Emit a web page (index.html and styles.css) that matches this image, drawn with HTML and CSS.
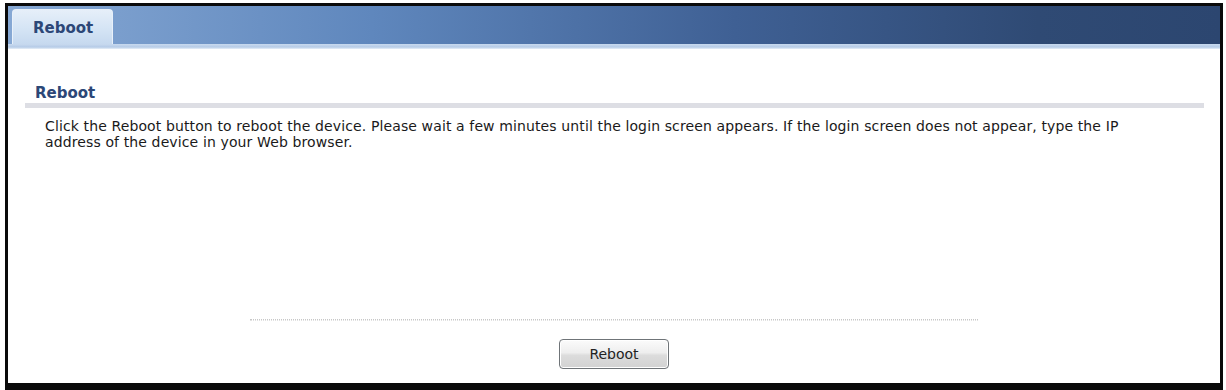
FILE: index.html
```html
<!DOCTYPE html>
<html>
<head>
<meta charset="utf-8">
<link rel="stylesheet" href="styles.css">
</head>
<body>
<div class="frame">
  <div class="header">
    <div class="tab">Reboot</div>
  </div>
  <div class="header-line"></div>
  <div class="content">
    <div class="section-title">Reboot</div>
    <div class="section-bar"></div>
    <p class="desc">Click the Reboot button to reboot the device. Please wait a few minutes until the login screen appears. If the login screen does not appear, type the IP address of the device in your Web browser.</p>
  </div>
  <div class="footer">
    <div class="dots"></div>
    <button class="btn">Reboot</button>
  </div>
</div>
</body>
</html>
```
FILE: styles.css
```css
html, body {
  margin: 0;
  padding: 0;
  background: #ffffff;
}
body {
  padding: 3px 0 0 5px;
  font-family: "DejaVu Sans", Tahoma, sans-serif;
}
.frame {
  width: 1212px;
  height: 377px;
  border: 3px solid #0a0a0a;
  border-bottom-width: 7px;
  display: flex;
  flex-direction: column;
  background: #ffffff;
}
.header {
  height: 38px;
  background: linear-gradient(to right, #86a8d4 0%, #5f87bd 30%, #3f6094 60%, #2f4a74 85%, #2c4670 100%);
  display: flex;
  align-items: flex-end;
  padding-left: 4px;
}
.tab {
  width: 101px;
  height: 35px;
  box-sizing: border-box;
  border: 1px solid #e8f0f9;
  border-bottom: none;
  border-radius: 4px 4px 0 0;
  background: linear-gradient(to bottom, #e6eff9 0%, #d3e3f4 60%, #c6d9ef 100%);
  color: #2c4777;
  font-weight: bold;
  font-size: 15px;
  padding: 9px 0 0 20px;
}
.header-line {
  height: 5px;
  background: linear-gradient(to bottom, #c9daef 0%, #b5cbe7 60%, #e7eff8 100%);
}
.content {
  flex: 1;
  padding: 35px 16px 0 17px;
}
.section-title {
  color: #2c4777;
  font-weight: bold;
  font-size: 15px;
  padding-left: 10px;
  line-height: 18px;
}
.section-bar {
  height: 5px;
  margin-top: 1px;
  background: #dddee4;
}
.desc {
  margin: 10px 0 0 20px;
  padding-right: 60px;
  font-size: 14px;
  line-height: 16px;
  color: #1a1a1a;
  letter-spacing: 0.12px;
}
.footer {
  display: flex;
  flex-direction: column;
  align-items: center;
  padding-bottom: 14px;
}
.dots {
  width: 728px;
  height: 0;
  border-top: 1px dotted #c8c8c8;
  border-bottom: 1px dotted #e2e2e2;
  margin-bottom: 18px;
}
.btn {
  width: 110px;
  height: 30px;
  border: 1px solid #6f7478;
  border-radius: 4px;
  background: linear-gradient(to bottom, #fbfbfb 0%, #eeeeee 45%, #dcdcdc 55%, #d2d2d2 100%);
  box-shadow: inset 0 0 0 1px #ffffff;
  font-family: "DejaVu Sans", Tahoma, sans-serif;
  font-size: 14px;
  color: #222222;
  padding: 0;
}
```
